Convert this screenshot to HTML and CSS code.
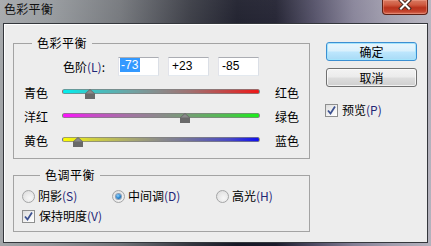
FILE: index.html
```html
<!DOCTYPE html>
<html lang="zh-CN">
<head>
<meta charset="utf-8">
<title>色彩平衡</title>
<link rel="stylesheet" href="styles.css">
</head>
<body>
<div class="window">
  <div class="titlebar">
    <span class="title">色彩平衡</span>
    <div class="close">
      <svg width="14" height="11" viewBox="0 0 14 11">
        <path d="M3 1.5 L11 9.5 M11 1.5 L3 9.5" stroke="#4a2a22" stroke-width="4" stroke-linecap="square"/>
        <path d="M3 1.5 L11 9.5 M11 1.5 L3 9.5" stroke="#ffffff" stroke-width="2" stroke-linecap="square"/>
      </svg>
    </div>
  </div>
  <div class="client">
    <div class="left">
      <fieldset class="group g1">
        <legend>色彩平衡</legend>
        <div class="level-row">
          <span class="level-label">色阶<span class="acc">(L)</span>:</span>
          <div class="field"><span class="sel">-73</span></div>
          <div class="field">+23</div>
          <div class="field">-85</div>
        </div>
        <div class="sliders">
          <div class="slider-row">
            <span class="lbl">青色</span>
            <div class="track cr">
              <svg class="thumb" style="left:22px" width="10" height="10" viewBox="0 0 10 10"><path d="M5 0 L10 4.5 L10 10 L0 10 L0 4.5 Z" fill="#6a6a6a"/><path d="M5 1 L9 4.6 L1 4.6 Z" fill="#8a8a8a"/></svg>
            </div>
            <span class="rlbl">红色</span>
          </div>
          <div class="slider-row">
            <span class="lbl">洋红</span>
            <div class="track mg">
              <svg class="thumb" style="left:117px" width="10" height="10" viewBox="0 0 10 10"><path d="M5 0 L10 4.5 L10 10 L0 10 L0 4.5 Z" fill="#6a6a6a"/><path d="M5 1 L9 4.6 L1 4.6 Z" fill="#8a8a8a"/></svg>
            </div>
            <span class="rlbl">绿色</span>
          </div>
          <div class="slider-row">
            <span class="lbl">黄色</span>
            <div class="track yb">
              <svg class="thumb" style="left:10px" width="10" height="10" viewBox="0 0 10 10"><path d="M5 0 L10 4.5 L10 10 L0 10 L0 4.5 Z" fill="#6a6a6a"/><path d="M5 1 L9 4.6 L1 4.6 Z" fill="#8a8a8a"/></svg>
            </div>
            <span class="rlbl">蓝色</span>
          </div>
        </div>
      </fieldset>
      <fieldset class="group g2">
        <legend>色调平衡</legend>
        <div class="opt-row">
          <span class="opt w1"><span class="radio"></span>阴影<span class="acc">(S)</span></span>
          <span class="opt w2"><span class="radio on"><span class="dot"></span></span>中间调<span class="acc">(D)</span></span>
          <span class="opt"><span class="radio"></span>高光<span class="acc">(H)</span></span>
        </div>
        <div class="opt-row">
          <span class="opt"><span class="check"><svg width="11" height="11" viewBox="0 0 11 11"><path d="M2 5.5 L4.5 8.5 L9 1.5" fill="none" stroke="#3d5291" stroke-width="1.8"/></svg></span>保持明度<span class="acc">(V)</span></span>
        </div>
      </fieldset>
    </div>
    <div class="right">
      <div class="btn default">确定</div>
      <div class="btn">取消</div>
      <span class="opt preview"><span class="check"><svg width="11" height="11" viewBox="0 0 11 11"><path d="M2 5.5 L4.5 8.5 L9 1.5" fill="none" stroke="#3d5291" stroke-width="1.8"/></svg></span>预览<span class="acc">(P)</span></span>
    </div>
  </div>
</div>
</body>
</html>
```

FILE: styles.css
```css
html, body {
  margin: 0;
  padding: 0;
}
body {
  width: 431px;
  height: 246px;
  overflow: hidden;
  font-family: "Noto Sans CJK SC", "Noto Sans", sans-serif;
  font-size: 12px;
  color: #000;
}
.window {
  width: 431px;
  height: 246px;
  box-sizing: border-box;
  padding: 0 3px 3px 3px;
  display: flex;
  flex-direction: column;
  background:
    linear-gradient(180deg, rgba(255,255,255,0.08), rgba(0,0,0,0) 30%),
    linear-gradient(90deg, #a3a6a9 0%, #92969a 12%, #6f7277 28%, #34363f 44%, #171826 55%, #1b1b2b 64%, #4e4b63 73%, #837f95 82%, #a19eae 91%, #b4b2bd 100%);
}
.titlebar {
  height: 23px;
  display: flex;
  justify-content: space-between;
  align-items: flex-start;
  flex: none;
}
.title {
  line-height: 16px;
  padding: 1px 0 0 1px;
  color: #101010;
  letter-spacing: 0.3px;
}
.close {
  width: 46px;
  height: 15px;
  box-sizing: border-box;
  border: 1px solid #5e2015;
  border-top: none;
  border-radius: 0 0 4px 4px;
  background: linear-gradient(180deg, #d87a62 0%, #cf5a40 35%, #b8321c 55%, #c1402a 80%, #d9705a 100%);
  box-shadow: inset 0 0 0 1px rgba(255,190,170,0.35);
  display: flex;
  justify-content: center;
  align-items: flex-start;
}
.close svg {
  display: block;
  margin-top: -1px;
}
.client {
  height: 220px;
  box-sizing: border-box;
  border: 1px solid #34373c;
  background: #ededed;
  box-shadow: inset 1px 1px 0 #ffffff;
  display: flex;
  align-items: flex-start;
}
.left {
  padding: 11px 0 0 9px;
  width: 297px;
  flex: none;
}
.group {
  margin: 0;
  padding: 0;
  width: 297px;
  box-sizing: border-box;
  border: 1px solid #a3a3a3;
  min-width: 0;
}
.group legend {
  margin-left: 18px;
  padding: 0 5px;
  line-height: 16px;
  letter-spacing: 0.5px;
}
.g1 {
  padding-bottom: 1px;
}
.g2 {
  margin-top: 8px;
  padding: 3px 0 5px 8px;
}
.level-row {
  margin-top: 6px;
  padding-left: 49px;
  display: flex;
  align-items: center;
  height: 19px;
}
.level-label {
  width: 55px;
  line-height: 16px;
}
.acc {
  color: #1f2777;
}
.field {
  width: 41px;
  height: 19px;
  box-sizing: border-box;
  margin-right: 9px;
  border: 1px solid;
  border-color: #abadb3 #dbdfe6 #e3e9ef #e2e3ea;
  background: #fff;
  font-family: "Liberation Sans", Arial, sans-serif;
  font-size: 12px;
  line-height: 17px;
  padding-left: 3px;
}
.field .sel {
  display: inline-block;
  background: #3399ff;
  color: #fff;
  line-height: 14px;
  padding: 0 2px 0 1px;
  margin-left: -2px;
  vertical-align: 1px;
}
.sliders {
  padding-top: 9px;
}
.slider-row {
  display: flex;
  align-items: flex-start;
  height: 24px;
  padding-left: 10px;
}
.lbl {
  width: 38px;
  line-height: 16px;
}
.rlbl {
  margin-left: 15px;
  line-height: 16px;
}
.track {
  position: relative;
  width: 198px;
  height: 5px;
  box-sizing: border-box;
  margin-top: 4px;
  border: 1px solid rgba(130,130,130,0.75);
  border-radius: 3px;
}
.track.cr {
  background: linear-gradient(90deg, #00f0f0 0%, #3cc4c4 15%, #6fa3a3 35%, #8a8a8a 50%, #a07070 65%, #c84040 85%, #f01818 100%);
}
.track.mg {
  background: linear-gradient(90deg, #ff10ff 0%, #c84ac8 15%, #a075a0 35%, #8a8a8a 50%, #72a072 65%, #4cc04c 85%, #18f018 100%);
}
.track.yb {
  background: linear-gradient(90deg, #ffff00 0%, #d0d040 15%, #a8a870 35%, #8a8a8a 50%, #70709e 65%, #4848c4 85%, #1010f0 100%);
}
.thumb {
  position: absolute;
  top: -1px;
  display: block;
}
.opt-row {
  display: flex;
  align-items: center;
  height: 20px;
}
.opt {
  display: inline-flex;
  align-items: center;
  line-height: 16px;
}
.opt.w1 {
  width: 90px;
}
.opt.w2 {
  width: 104px;
}
.radio {
  width: 13px;
  height: 13px;
  box-sizing: border-box;
  border-radius: 50%;
  border: 1px solid #a4a5a6;
  background: radial-gradient(circle at 60% 65%, #f7f7f7 0%, #e6e6e6 60%, #d6d6d6 100%);
  margin-right: 3px;
  display: flex;
  align-items: center;
  justify-content: center;
}
.radio .dot {
  width: 5px;
  height: 5px;
  border-radius: 50%;
  background: radial-gradient(circle at 40% 35%, #8fd3ff 0%, #2a86d0 50%, #0f4f8c 100%);
  box-shadow: 0 0 0 1px rgba(40,80,130,0.5);
}
.check {
  width: 13px;
  height: 13px;
  box-sizing: border-box;
  border: 1px solid #8e8f8f;
  background: linear-gradient(135deg, #dcdcdc 0%, #f4f4f4 60%, #ffffff 100%);
  margin-right: 4px;
  display: flex;
  align-items: center;
  justify-content: center;
}
.check svg {
  display: block;
}
.right {
  margin-left: 16px;
  padding-top: 18px;
  width: 91px;
  display: flex;
  flex-direction: column;
}
.btn {
  height: 19px;
  box-sizing: border-box;
  border: 1px solid #707070;
  border-radius: 3px;
  background: linear-gradient(180deg, #f3f3f3 0%, #ebebeb 48%, #dddddd 52%, #cfcfcf 100%);
  box-shadow: inset 0 0 0 1px rgba(255,255,255,0.7);
  text-align: center;
  line-height: 17px;
}
.btn + .btn {
  margin-top: 7px;
}
.btn.default {
  border-color: #3c8fd2;
  background: linear-gradient(180deg, #e9f6fd 0%, #d9f0fc 48%, #bde6fd 52%, #a8dbf6 100%);
  box-shadow: inset 0 0 0 1px #a4e4fc;
}
.preview {
  margin-top: 15px;
  margin-left: -1px;
}
```
